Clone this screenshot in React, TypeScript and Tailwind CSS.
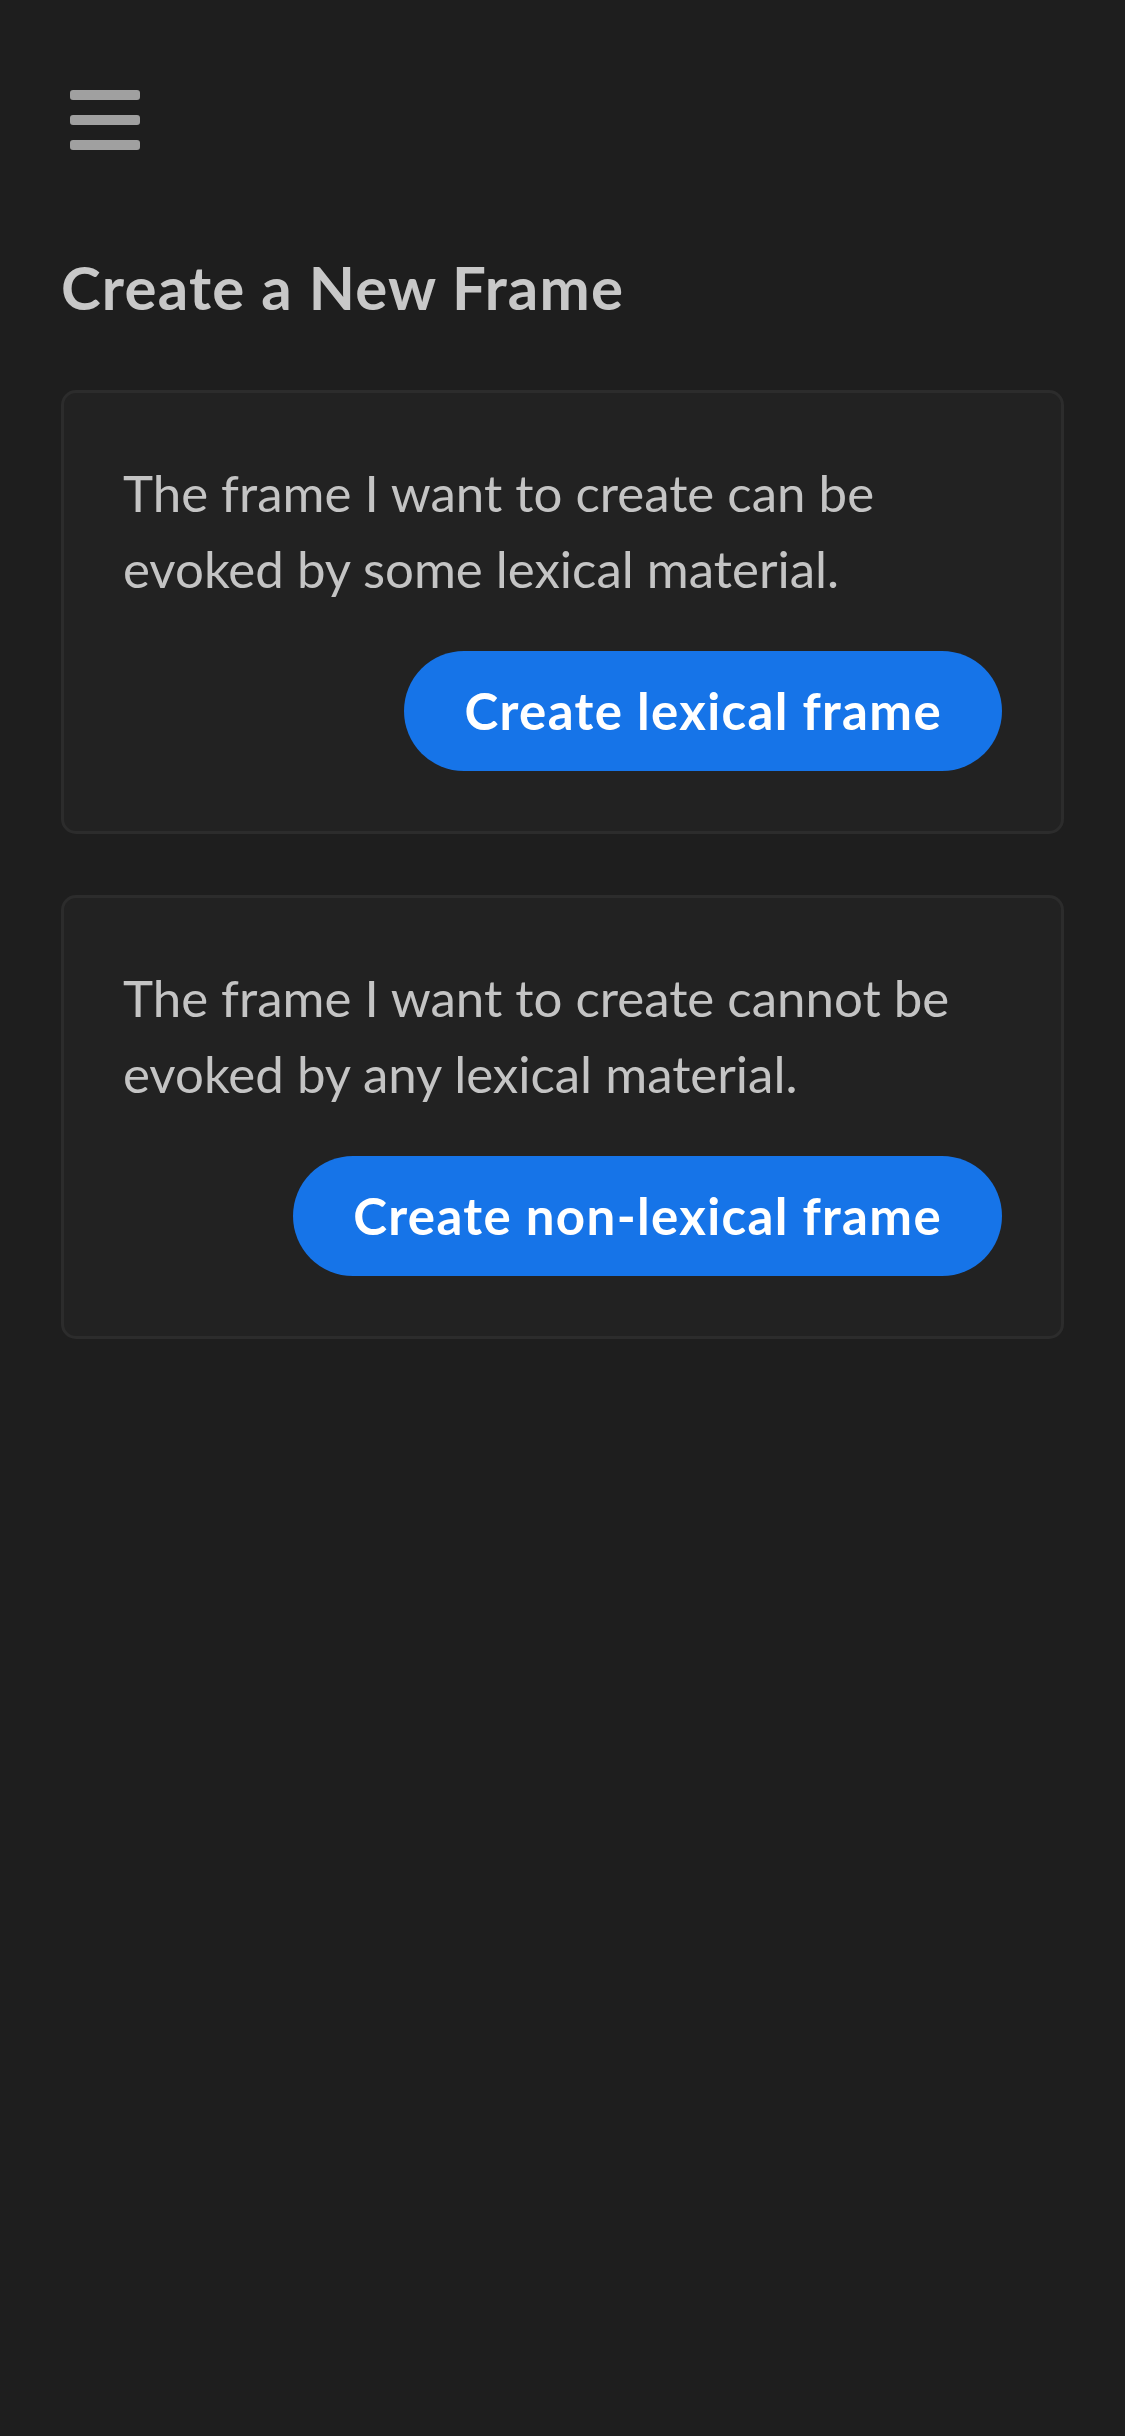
export default function App() {
  const font = { fontFamily: "Lato, 'Open Sans', sans-serif" }

  return (
    <div className="min-h-screen w-full bg-[#1e1e1e] px-[61px] pt-[90px]" style={font}>
      <button className="ml-[9px] flex flex-col gap-[15px]" aria-label="Menu">
        <span className="block h-[10px] w-[70px] rounded-[3px] bg-[#a0a0a0]" />
        <span className="block h-[10px] w-[70px] rounded-[3px] bg-[#a0a0a0]" />
        <span className="block h-[10px] w-[70px] rounded-[3px] bg-[#a0a0a0]" />
      </button>

      <h1 className="mt-[101px] text-[60px] font-bold leading-[72px] tracking-[1.2px] text-[#c8c8c8]">
        Create a New Frame
      </h1>

      <div className="mt-[67px] flex flex-col gap-[61px]">
        <Card
          text="The frame I want to create can be evoked by some lexical material."
          label="Create lexical frame"
        />
        <Card
          text="The frame I want to create cannot be evoked by any lexical material."
          label="Create non-lexical frame"
        />
      </div>
    </div>
  )
}

function Card({ text, label }: { text: string; label: string }) {
  return (
    <div className="rounded-[15px] border-[3px] border-[#2c2c2c] bg-[#222222] px-[59px] pb-[60px] pt-[62px]">
      <p className="text-[51px] leading-[76px] text-[#c4c4c4]">{text}</p>
      <div className="mt-[44px] flex justify-end">
        <button className="h-[120px] rounded-full bg-[#1674e8] px-[60px] text-[51px] font-bold tracking-[1.35px] text-white">
          {label}
        </button>
      </div>
    </div>
  )
}
